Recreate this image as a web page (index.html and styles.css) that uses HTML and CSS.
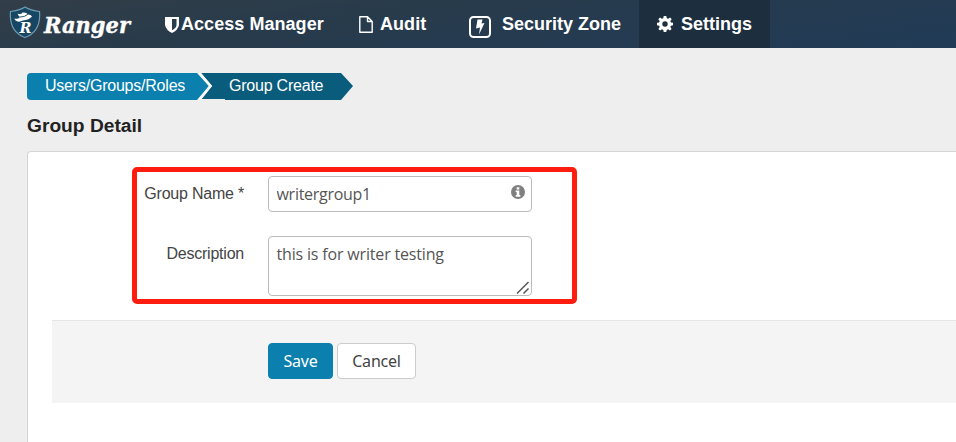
FILE: index.html
```html
<!DOCTYPE html>
<html lang="en">
<head>
<meta charset="utf-8">
<title>Ranger</title>
<link rel="stylesheet" href="styles.css">
</head>
<body>
<header class="topbar">
  <a class="brand">
    <svg class="shield" viewBox="0 0 32 34" width="32" height="34">
      <path d="M16 2C12 4.500 6 6 1.500 6.500C0.500 18 4 28 16 32.500C28 28 31.500 18 30.500 6.500C26 6 20 4.500 16 2Z" fill="#164662" stroke="#6f9db5" stroke-width="1.200"/>
      <path d="M5.500 13.500Q9 14.500 10.500 12.500Q16 12.500 19 9.500Q22 9.500 23 11.500Q20 15 14 15.500Q10 17.500 7.500 16Q5.500 15 5.500 13.500ZM8.500 8.500Q12 10 13.500 7.500Q17.500 7 18.500 9Q15 12 10 11.500Z" fill="#fff"/>
      <text x="10.500" y="27.500" textLength="12" lengthAdjust="spacingAndGlyphs" class="shield-letter">R</text>
    </svg>
    <svg class="wordmark" width="96" height="40"><text x="1" y="28" textLength="86" lengthAdjust="spacingAndGlyphs">Ranger</text></svg>
  </a>
  <nav class="nav">
    <a class="item access"><svg width="14" height="17" viewBox="0 0 14 17"><path fill-rule="evenodd" d="M0 1H14V9Q13 14 7 17Q1 14 0 9ZM7 3V14.300Q11.500 12 11.500 9V3Z" fill="#fff"/></svg><span>Access Manager</span></a>
    <a class="item audit"><svg width="14" height="17" viewBox="0 0 14 17"><path d="M.8 .8H8.500L13.200 5.500V16.200H.8ZM8.500 .8V5.500H13.200" fill="none" stroke="#fff" stroke-width="1.400" stroke-linejoin="round"/></svg><span>Audit</span></a>
    <a class="item zone"><svg width="22" height="22" viewBox="0 0 22 22"><rect x="1" y="1" width="20" height="20" rx="3.500" fill="none" stroke="#fff" stroke-width="2"/><path d="M8.500 3.500H13.500L12.500 7.500L15.500 7L10 18.500L11 11.500L7 12.500Z" fill="#fff"/></svg><span>Security Zone</span></a>
    <a class="item settings active"><svg width="16" height="16" viewBox="0 0 16 16"><path fill-rule="evenodd" d="M6.700 0H9.300L9.800 2.200L11.200 2.800L13.100 1.500L14.700 3.200L13.300 5L13.900 6.400L16 6.800V9.200L13.900 9.700L13.300 11L14.600 12.900L12.900 14.600L11.100 13.300L9.700 13.900L9.300 16H6.700L6.300 13.900L4.900 13.300L3.100 14.600L1.400 12.900L2.700 11L2.100 9.700L0 9.200V6.800L2.100 6.400L2.700 5L1.300 3.200L3 1.500L4.900 2.800L6.300 2.200ZM8 5.300A2.700 2.700 0 1 0 8 10.700A2.700 2.700 0 1 0 8 5.300Z" fill="#fff"/></svg><span>Settings</span></a>
  </nav>
</header>
<main class="page">
  <div class="crumbs"><a class="crumb first">Users/Groups/Roles</a><a class="crumb last"><svg class="crumb-shape" width="153" height="27"><path d="M0 0H140L152 13L140 27H24V26H0L11 13Z" fill="#0a5c7c"/><path d="M-2.500 -1L9.500 13L-2.500 28" fill="none" stroke="#fafafa" stroke-width="2.600"/></svg><span>Group Create</span></a></div>
  <h1 class="title">Group Detail</h1>
  <section class="panel">
    <div class="fields">
      <label for="name">Group Name *</label>
      <div class="control"><input id="name" type="text" value="writergroup1"><svg class="info" width="14" height="14" viewBox="0 0 14 14"><circle cx="7" cy="7" r="7" fill="#808080"/><path d="M5.700 2.300H8.300V4.500H5.700ZM4.700 5.500H8.300V10H9.300V11.700H4.700V10H5.700V7H4.700Z" fill="#fff"/></svg></div>
      <label for="desc">Description</label>
      <div class="control"><textarea id="desc">this is for writer testing</textarea><svg class="grip" width="14" height="14" viewBox="0 0 14 14"><path d="M1 12.500L12.500 1M7.500 12.500L12.500 7.500" stroke="#555" stroke-width="1.500"/></svg></div>
    </div>
    <div class="actions"><button class="save">Save</button><button class="cancel">Cancel</button></div>
  </section>
</main>
</body>
</html>
```
FILE: styles.css
```css
* { box-sizing: border-box; }
body { margin: 0; height: 442px; overflow: hidden; background: #eee; font-family: "Liberation Sans", sans-serif; font-size: 16px; }
.topbar { height: 48px; display: flex; background: linear-gradient(172deg, #323e48 0%, #283b4b 35%, #213b57 100%); }
.brand { display: flex; width: 149px; flex: none; padding: 5px 0 0 9px; }
.shield { flex: none; }
.shield-letter { font: italic bold 15px "DejaVu Serif", serif; fill: #fff; }
.wordmark { flex: none; margin-left: 2px; overflow: visible; fill: #fff; stroke: #fff; stroke-width: 0.4px; font: italic bold 22px "DejaVu Serif", serif; }
.nav { display: flex; color: #fff; font-size: 18px; font-weight: bold; letter-spacing: 0.05px; }
.item { display: flex; align-items: center; height: 48px; white-space: nowrap; }
.item svg { flex: none; }
.access { width: 194px; padding-left: 16px; gap: 2px; }
.audit { width: 111px; padding-left: 16px; gap: 7px; }
.zone { width: 185px; padding-left: 15px; gap: 11px; letter-spacing: 0; }
.zone svg { margin-top: 6px; }
.settings { width: 131px; padding-left: 18px; gap: 8px; letter-spacing: 0; }
.active { background: #1d2f3f; }
.page { padding: 25px 0 0 27px; }
.crumbs { display: flex; height: 27px; color: #fff; line-height: 26px; letter-spacing: -0.22px; }
.crumb.first { width: 185px; padding-left: 18px; background: #0b7fad; border-radius: 4px 0 0 4px; clip-path: polygon(0 0, 170px 0, 182px 13px, 170px 27px, 0 27px); }
.crumb.last { position: relative; width: 153px; margin-left: -11px; padding-left: 28px; }
.crumb-shape { position: absolute; left: 0; top: 0; overflow: visible; clip-path: inset(0 0 0 -6px); }
.crumb.last span { position: relative; }
.title { margin: 15px 0 0; font-size: 19.2px; line-height: 22px; color: #222; }
.panel { margin-top: 14px; height: 300px; border: 1px solid #d5d5d5; border-right: 0; border-radius: 4px 0 0 0; background: #fff; padding: 15px 0 0 24px; }
.fields { width: 445px; height: 137px; margin-left: 80px; border: 5px solid #ff1d10; border-radius: 5px; padding: 4px 0 0 3px; display: grid; grid-template-columns: 104px 264px; grid-template-rows: 36px 60px; gap: 24px; }
.fields label { text-align: right; line-height: 36px; color: #444; letter-spacing: -0.22px; }
.control { position: relative; }
.control input, .control textarea { display: block; width: 264px; height: 100%; margin: 0; border: 1px solid #bbb; border-radius: 4px; padding: 0 7.5px; background: #fff; color: #555; font: 16px "Open Sans", sans-serif; letter-spacing: -0.28px; outline: 0; resize: none; }
.control textarea { padding-top: 6px; line-height: 22px; letter-spacing: -0.17px; }
.info { position: absolute; right: 7px; top: 9px; }
.grip { position: absolute; right: 2px; bottom: 1px; }
.actions { margin-top: 16px; height: 83px; background: #f4f4f4; border-top: 1px solid #e5e5e5; padding: 22px 0 0 216px; display: flex; gap: 4px; }
.actions button { height: 36px; padding: 0; border: 1px solid #0b7fad; border-radius: 4px; font: 16px "Noto Sans", sans-serif; letter-spacing: -0.2px; }
.actions .save { width: 65px; background: #0b7fad; color: #fff; }
.actions .cancel { width: 79px; background: #fff; border-color: #ccc; color: #444; }
```
